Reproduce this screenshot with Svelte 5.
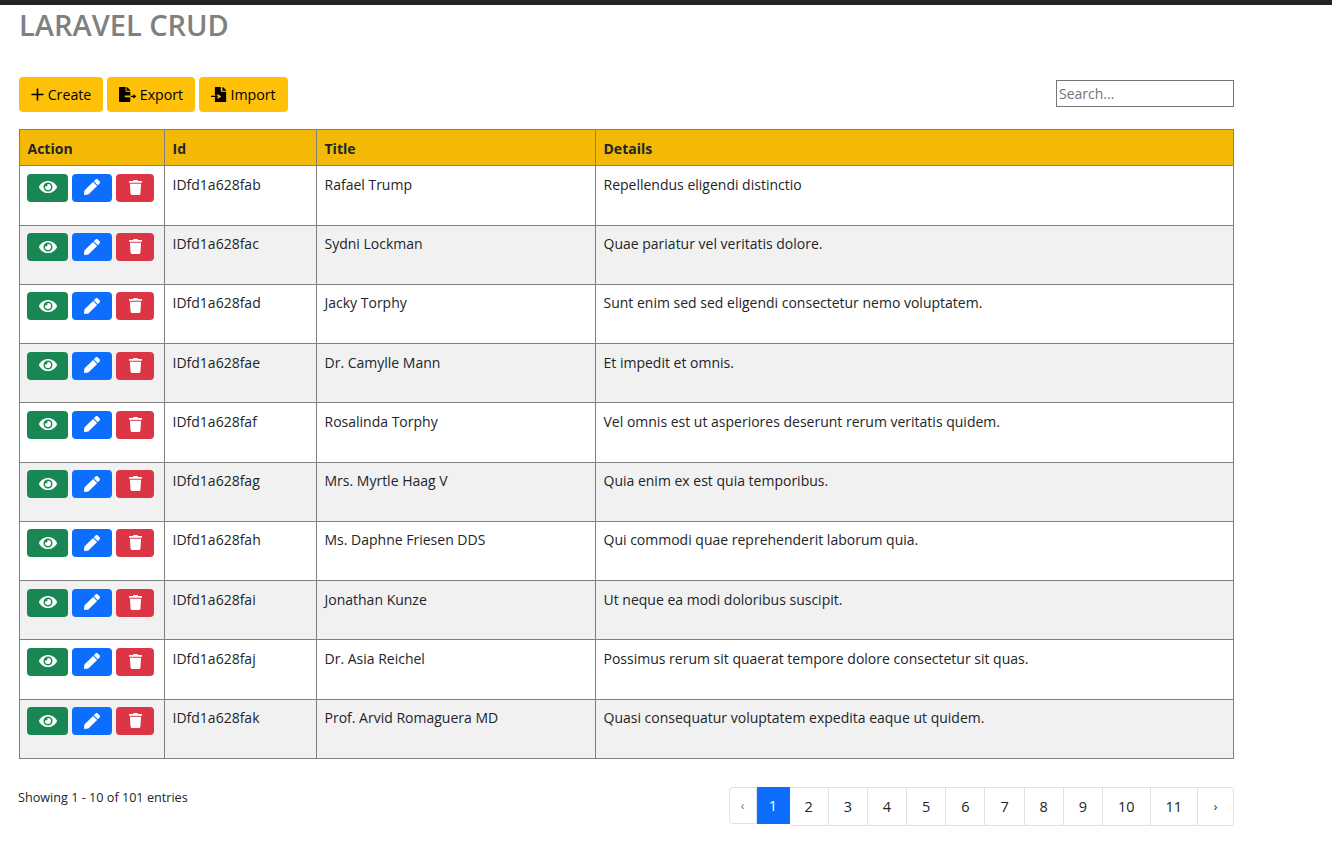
<script>
  const rows = [
    ['IDfd1a628fab', 'Rafael Trump', 'Repellendus eligendi distinctio'],
    ['IDfd1a628fac', 'Sydni Lockman', 'Quae pariatur vel veritatis dolore.'],
    ['IDfd1a628fad', 'Jacky Torphy', 'Sunt enim sed sed eligendi consectetur nemo voluptatem.'],
    ['IDfd1a628fae', 'Dr. Camylle Mann', 'Et impedit et omnis.'],
    ['IDfd1a628faf', 'Rosalinda Torphy', 'Vel omnis est ut asperiores deserunt rerum veritatis quidem.'],
    ['IDfd1a628fag', 'Mrs. Myrtle Haag V', 'Quia enim ex est quia temporibus.'],
    ['IDfd1a628fah', 'Ms. Daphne Friesen DDS', 'Qui commodi quae reprehenderit laborum quia.'],
    ['IDfd1a628fai', 'Jonathan Kunze', 'Ut neque ea modi doloribus suscipit.'],
    ['IDfd1a628faj', 'Dr. Asia Reichel', 'Possimus rerum sit quaerat tempore dolore consectetur sit quas.'],
    ['IDfd1a628fak', 'Prof. Arvid Romaguera MD', 'Quasi consequatur voluptatem expedita eaque ut quidem.']
  ];
  const pages = ['2', '3', '4', '5', '6', '7', '8', '9', '10', '11'];
</script>

<div class="page">
  <h1>LARAVEL CRUD</h1>

  <div class="toolbar">
    <div class="tools">
      <button class="tool tool-create">
        <svg class="plus" viewBox="0 0 14 14"><path d="M7 0.5v13M0.5 7h13" /></svg>
        Create
      </button>
      <button class="tool tool-export">
        <svg class="file" viewBox="0 0 576 512">
          <path fill="currentColor" d="M384 121.9c0-6.3-2.5-12.4-7-16.9L279.1 7c-4.5-4.5-10.6-7-17-7H256v128h128v-6.1zM192 336v-32c0-8.8 7.2-16 16-16h176V160H248c-13.2 0-24-10.8-24-24V0H24C10.7 0 0 10.7 0 24v464c0 13.3 10.7 24 24 24h336c13.3 0 24-10.7 24-24V352H208c-8.8 0-16-7.2-16-16z" />
          <path class="arrow" d="M400 320h150M490 260l60 60-60 60" />
        </svg>
        Export
      </button>
      <button class="tool tool-import">
        <svg class="file file-in" viewBox="60 0 516 512">
          <path fill="currentColor" d="M576 121.9c0-6.3-2.5-12.4-7-16.9L471.1 7c-4.5-4.5-10.6-7-17-7H448v128h128v-6.1zM416 160c-13.2 0-24-10.8-24-24V0H216c-13.3 0-24 10.7-24 24v264h96v-60l120 92-120 92v-60h-96v148c0 13.3 10.7 24 24 24h336c13.3 0 24-10.7 24-24V160z" />
          <path class="arrow" d="M60 320h230" />
        </svg>
        Import
      </button>
    </div>
    <input class="search" type="text" placeholder="Search..." />
  </div>

  <table>
    <colgroup>
      <col class="col-action" />
      <col class="col-id" />
      <col class="col-title" />
      <col />
    </colgroup>
    <thead>
      <tr>
        <th>Action</th>
        <th>Id</th>
        <th>Title</th>
        <th>Details</th>
      </tr>
    </thead>
    <tbody>
      {#each rows as row}
        <tr>
          <td>
            <div class="actions">
              <button class="act act-view" aria-label="View">
                <svg class="eye" viewBox="0 0 576 512"><path d="M572.52 241.4C518.29 135.59 410.93 64 288 64S57.68 135.64 3.48 241.41a32.35 32.35 0 0 0 0 29.19C57.71 376.41 165.07 448 288 448s230.32-71.64 284.52-177.41a32.35 32.35 0 0 0 0-29.19zM288 400a144 144 0 1 1 144-144 143.93 143.93 0 0 1-144 144zm0-240a95.31 95.31 0 0 0-25.31 3.79 47.85 47.85 0 0 1-66.9 66.9A95.78 95.78 0 1 0 288 160z" /></svg>
              </button>
              <button class="act act-edit" aria-label="Edit">
                <svg class="pen" viewBox="0 0 512 512"><path d="M290.74 93.24l128.02 128.02-277.99 277.99-114.14 12.6C11.35 513.54-1.56 500.62.14 485.34l12.7-114.22 277.9-277.88zm207.2-19.06l-60.11-60.11c-18.75-18.75-49.16-18.75-67.91 0l-56.55 56.55 128.02 128.02 56.55-56.55c18.75-18.76 18.75-49.16 0-67.91z" /></svg>
              </button>
              <button class="act act-delete" aria-label="Delete">
                <svg class="trash" viewBox="0 0 448 512"><path d="M432 32H312l-9.4-18.7A24 24 0 0 0 281.1 0H166.8a23.72 23.72 0 0 0-21.4 13.3L136 32H16A16 16 0 0 0 0 48v32a16 16 0 0 0 16 16h416a16 16 0 0 0 16-16V48a16 16 0 0 0-16-16zM53.2 467a48 48 0 0 0 47.9 45h245.8a48 48 0 0 0 47.9-45L416 128H32z" /></svg>
              </button>
            </div>
          </td>
          <td>{row[0]}</td>
          <td>{row[1]}</td>
          <td>{row[2]}</td>
        </tr>
      {/each}
    </tbody>
  </table>

  <div class="footer">
    <p class="count">Showing 1 - 10 of 101 entries</p>
    <nav class="pager">
      <span class="pg pg-prev">‹</span>
      <span class="pg pg-active">1</span>
      {#each pages as p}
        <span class="pg" class:wide={p.length > 1}>{p}</span>
      {/each}
      <span class="pg pg-next">›</span>
    </nav>
  </div>
</div>

<style>
  :global(body) {
    background: #ffffff;
    color: #212529;
    font-family: "Open Sans", "Noto Sans", sans-serif;
  }

  .page {
    border-top: 5px solid #232323;
    padding: 0 98px 0 19px;
    width: 1332px;
    box-sizing: border-box;
  }

  h1 {
    margin: 0;
    height: 70px;
    box-sizing: border-box;
    font-size: 29px;
    line-height: 40px;
    font-weight: 600;
    color: #808080;
  }

  .toolbar {
    display: flex;
    justify-content: space-between;
    align-items: flex-start;
    height: 35px;
    margin-top: 2px;
  }

  .tools {
    display: flex;
    gap: 4px;
  }

  .tool {
    display: flex;
    align-items: center;
    justify-content: center;
    gap: 4px;
    height: 35px;
    padding: 0;
    border: 0;
    border-radius: 4px;
    background: #ffc107;
    color: #000000;
    font-family: inherit;
    font-size: 14.2px;
  }

  .tool-create { width: 84px; }
  .tool-export { width: 88px; }
  .tool-import { width: 89px; }

  .plus {
    width: 13px;
    height: 13px;
    fill: none;
    stroke: #000000;
    stroke-width: 1.7;
  }

  .file {
    width: 17px;
    height: 15px;
  }

  .file-in {
    width: 15.2px;
  }

  .arrow {
    fill: none;
    stroke: currentColor;
    stroke-width: 44;
  }

  .search {
    width: 178px;
    height: 27px;
    margin-top: 3px;
    box-sizing: border-box;
    padding: 0 2px;
    border: 1px solid #767676;
    border-radius: 0;
    outline: none;
    font-family: inherit;
    font-size: 14px;
  }

  .search::placeholder {
    color: #757575;
  }

  table {
    width: 1215px;
    margin-top: 17px;
    border-collapse: collapse;
    table-layout: fixed;
    font-size: 14px;
    color: #212529;
  }

  .col-action { width: 145px; }
  .col-id { width: 152px; }
  .col-title { width: 279px; }

  th, td {
    border: 1px solid #808080;
    padding: 7.5px 7.5px 8px;
    text-align: left;
    vertical-align: top;
    line-height: 21px;
    overflow: hidden;
    white-space: nowrap;
  }

  th {
    height: 36.45px;
    box-sizing: border-box;
    background: #f4b806;
    font-weight: 700;
    vertical-align: middle;
    padding: 1px 7.5px 0;
  }

  td {
    height: 59.25px;
    box-sizing: border-box;
  }

  tbody tr:nth-child(even) {
    background: #f1f1f1;
  }

  .actions {
    display: flex;
    gap: 4px;
    margin-left: -0.5px;
  }

  .act {
    display: flex;
    align-items: center;
    justify-content: center;
    height: 28px;
    padding: 0 0 1px;
    border: 0;
    border-radius: 4px;
    color: #ffffff;
  }

  .act svg { fill: currentColor; }

  .act-view { width: 41px; background: #198754; }
  .act-edit { width: 40px; background: #0d6efd; }
  .act-delete { width: 38px; background: #dc3545; }

  .eye { width: 18px; height: 16px; }
  .pen { width: 16px; height: 16px; }
  .trash { width: 13px; height: 15px; }

  .footer {
    display: flex;
    justify-content: space-between;
    align-items: flex-start;
    margin-top: 28px;
  }

  .count {
    margin: 1px 0 0 -1px;
    font-size: 12.65px;
    line-height: 18px;
    color: #212529;
  }

  .pager {
    display: flex;
    align-items: flex-start;
    font-size: 14.5px;
  }

  .pg {
    display: flex;
    align-items: center;
    justify-content: center;
    box-sizing: border-box;
    width: 39.2px;
    height: 39.5px;
    border: 1px solid #dee2e6;
    border-left-width: 0;
    color: #212529;
    background: #ffffff;
  }

  .pg.wide { width: 47.5px; }

  .pg-prev {
    width: 28px;
    height: 37px;
    border-left-width: 1px;
    border-radius: 4px 0 0 4px;
    color: #6c757d;
    font-size: 12px;
  }

  .pg-active {
    width: 33px;
    height: 37px;
    border: 0;
    background: #0d6efd;
    color: #ffffff;
  }

  .pg-next {
    width: 36px;
    border-radius: 0 4px 4px 0;
    font-size: 12px;
  }
</style>
